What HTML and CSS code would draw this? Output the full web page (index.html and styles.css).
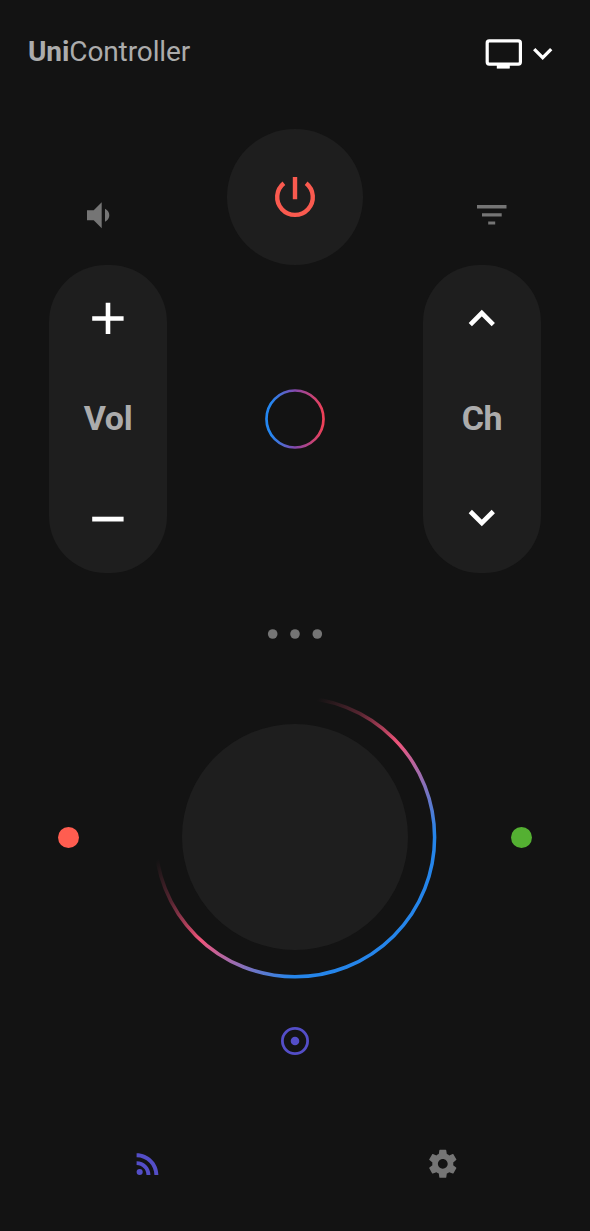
FILE: index.html
```html
<!DOCTYPE html>
<html lang="en">
<head>
<meta charset="utf-8">
<title>UniController</title>
<link rel="stylesheet" href="styles.css">
</head>
<body>
<main class="remote">
  <header class="header">
    <h1 class="brand"><b>Uni</b>Controller</h1>
    <div class="device">
      <svg width="38" height="32" viewBox="0 0 38 32"><rect x="2.2" y="2.9" width="33.2" height="23.2" rx="2" fill="none" stroke="#fff" stroke-width="3.2"/><path d="M11.8 26h13v4.6h-13z" fill="#fff"/></svg>
      <svg width="20" height="14" viewBox="0 0 20 14"><path d="M1.2 2.2 9.7 10.7 18.2 2.2" fill="none" stroke="#fff" stroke-width="3.3"/></svg>
    </div>
  </header>

  <section class="controls">
    <div class="side">
      <div class="hint hint-volume">
        <svg width="24" height="28" viewBox="0 0 24 28" fill="#757575"><path d="M1 9.3H7.7L15.7 1.3V27.3L7.7 19.3H1ZM19 7.8Q23.3 9.9 23.3 14.3 23.3 18.7 19 20.8Z"/></svg>
      </div>
      <div class="pill">
        <svg width="34" height="34" viewBox="0 0 34 34"><path d="M1.2 16.5H32.6M17 .8V32.1" stroke="#fff" stroke-width="4.6"/></svg>
        <span class="pill-label">Vol</span>
        <svg width="34" height="34" viewBox="0 0 34 34"><path d="M1.2 17.1H32.6" stroke="#fff" stroke-width="4.8"/></svg>
      </div>
    </div>

    <div class="middle">
      <div class="power">
        <svg width="44" height="44" viewBox="0 0 44 44" fill="none" stroke="#fa5a4f" stroke-width="4.4"><path d="M22 2V24.3M10.9 8.2A17.8 17.8 0 1 0 33.1 8.2"/></svg>
      </div>
      <svg class="ring" width="62" height="62" viewBox="0 0 62 62">
        <defs><linearGradient id="ring" x1="0" y1="0" x2="1" y2="0"><stop offset="0.08" stop-color="#2487f2"/><stop offset="0.5" stop-color="#8448aa"/><stop offset="1" stop-color="#ef4057"/></linearGradient></defs>
        <circle cx="31" cy="31" r="28.5" fill="none" stroke="url(#ring)" stroke-width="2.7"/>
      </svg>
    </div>

    <div class="side">
      <div class="hint hint-channel">
        <svg width="30" height="20" viewBox="0 0 30 20" fill="#757575"><path d="M0 0H29.5V3.4H0ZM5 8.2H24.7V11.5H5ZM11.2 16.5H18.2V19.5H11.2Z"/></svg>
      </div>
      <div class="pill">
        <svg width="34" height="34" viewBox="0 0 34 34"><path d="M5.3 22.6 16.8 11.1 28.3 22.6" fill="none" stroke="#fff" stroke-width="4.6"/></svg>
        <span class="pill-label">Ch</span>
        <svg width="34" height="34" viewBox="0 0 34 34"><path d="M5.3 9.5 16.8 21 28.3 9.5" fill="none" stroke="#fff" stroke-width="4.6"/></svg>
      </div>
    </div>
  </section>

  <div class="more">
    <svg width="56" height="12" viewBox="0 0 56 12" fill="#757575"><circle cx="5.7" cy="6" r="4.8"/><circle cx="28" cy="6" r="4.8"/><circle cx="50.3" cy="6" r="4.8"/></svg>
  </div>

  <section class="pad">
    <i class="key key-red"></i>
    <svg width="284" height="284" viewBox="0 0 284 284">
      <defs><linearGradient id="arc" gradientUnits="userSpaceOnUse" x1="85" y1="84" x2="211" y2="210"><stop offset="0" stop-color="#ef4f75" stop-opacity="0"/><stop offset="0.22" stop-color="#ef4f75" stop-opacity="0.3"/><stop offset="0.49" stop-color="#ef557b"/><stop offset="0.7" stop-color="#a26bad"/><stop offset="1" stop-color="#2585ea"/></linearGradient></defs>
      <circle cx="142" cy="142" r="113" fill="#1e1e1e"/>
      <circle cx="142" cy="142.2" r="139.6" fill="none" stroke="url(#arc)" stroke-width="3.5"/>
    </svg>
    <i class="key key-green"></i>
  </section>

  <div class="target">
    <svg width="30" height="30" viewBox="0 0 30 30"><circle cx="15" cy="15" r="12.6" fill="none" stroke="#544ec7" stroke-width="2.8"/><circle cx="15" cy="15" r="4.3" fill="#544ec7"/></svg>
  </div>

  <nav class="tabs">
    <svg width="33.6" height="33.6" viewBox="0 0 24 24" fill="#544ec7"><circle cx="6.18" cy="17.82" r="2.18"/><path d="M4 4.44v2.83c7.03 0 12.73 5.7 12.73 12.73h2.83c0-8.59-6.97-15.56-15.56-15.56zm0 5.66v2.83c3.9 0 7.07 3.17 7.07 7.07h2.83c0-5.47-4.43-9.9-9.9-9.9z"/></svg>
    <svg width="33.6" height="33.6" viewBox="0 0 24 24" fill="#757575"><path d="M19.43 12.98c.04-.32.07-.64.07-.98s-.03-.66-.07-.98l2.11-1.65c.19-.15.24-.42.12-.64l-2-3.46c-.12-.22-.39-.3-.61-.22l-2.49 1c-.52-.4-1.08-.73-1.69-.98l-.38-2.65C14.46 2.18 14.25 2 14 2h-4c-.25 0-.46.18-.49.42l-.38 2.65c-.61.25-1.17.59-1.69.98l-2.49-1c-.23-.09-.49 0-.61.22l-2 3.46c-.13.22-.07.49.12.64l2.11 1.65c-.04.32-.07.65-.07.98s.03.66.07.98l-2.11 1.65c-.19.15-.24.42-.12.64l2 3.46c.12.22.39.3.61.22l2.49-1c.52.4 1.08.73 1.69.98l.38 2.65c.03.24.24.42.49.42h4c.25 0 .46-.18.49-.42l.38-2.65c.61-.25 1.17-.59 1.69-.98l2.49 1c.23.09.49 0 .61-.22l2-3.46c.12-.22.07-.49-.12-.64l-2.11-1.65zM12 15.5c-1.93 0-3.5-1.57-3.5-3.5s1.57-3.5 3.5-3.5 3.5 1.57 3.5 3.5-1.57 3.5-3.5 3.5z"/></svg>
  </nav>
</main>
</body>
</html>
```
FILE: styles.css
```css
* {
  box-sizing: border-box;
}

body {
  margin: 0;
  background: #131313;
  font-family: Roboto, "Liberation Sans", sans-serif;
  color: #acacac;
}

svg {
  display: block;
  flex: none;
}

.remote {
  display: flex;
  flex-direction: column;
  width: 590px;
  height: 1231px;
}

.header {
  display: flex;
  justify-content: space-between;
  height: 129px;
  padding: 34px 37px 0 28px;
}

.brand {
  margin: 0;
  font-size: 28px;
  line-height: 36px;
  font-weight: 400;
  letter-spacing: -0.1px;
}

.device {
  display: flex;
  align-items: center;
  gap: 10px;
  height: 40px;
}

.controls {
  display: grid;
  grid-template-columns: 118px 1fr 118px;
  height: 443.5px;
  padding: 0 49px;
}

.hint {
  display: flex;
  height: 136px;
}

.hint-volume {
  padding: 72px 0 0 37px;
}

.hint-channel {
  padding: 76.3px 0 0 54px;
}

.pill {
  display: flex;
  flex-direction: column;
  align-items: center;
  justify-content: space-between;
  height: 307.5px;
  padding: 37px 0 36.5px;
  border-radius: 57px;
  background: #1e1e1e;
}

.pill-label {
  margin-top: -2px;
  font-size: 34px;
  line-height: 40px;
  font-weight: 700;
  letter-spacing: -0.3px;
}

.middle {
  display: flex;
  flex-direction: column;
  align-items: center;
}

.power {
  display: flex;
  align-items: center;
  justify-content: center;
  width: 135.5px;
  height: 135.5px;
  border-radius: 50%;
  background: #1e1e1e;
}

.ring {
  margin-top: 123px;
}

.more {
  display: flex;
  justify-content: center;
  padding-top: 55.5px;
}

.pad {
  display: flex;
  align-items: center;
  justify-content: space-between;
  margin-top: 55.2px;
  padding: 0 58.3px;
}

.key {
  width: 21px;
  height: 21px;
  border-radius: 50%;
}

.key-red {
  background: #ff5d50;
}

.key-green {
  background: #54b032;
}

.target {
  display: flex;
  justify-content: center;
  margin-top: 46.4px;
}

.tabs {
  display: flex;
  justify-content: space-between;
  padding: 91px 130.6px 0;
}
```
